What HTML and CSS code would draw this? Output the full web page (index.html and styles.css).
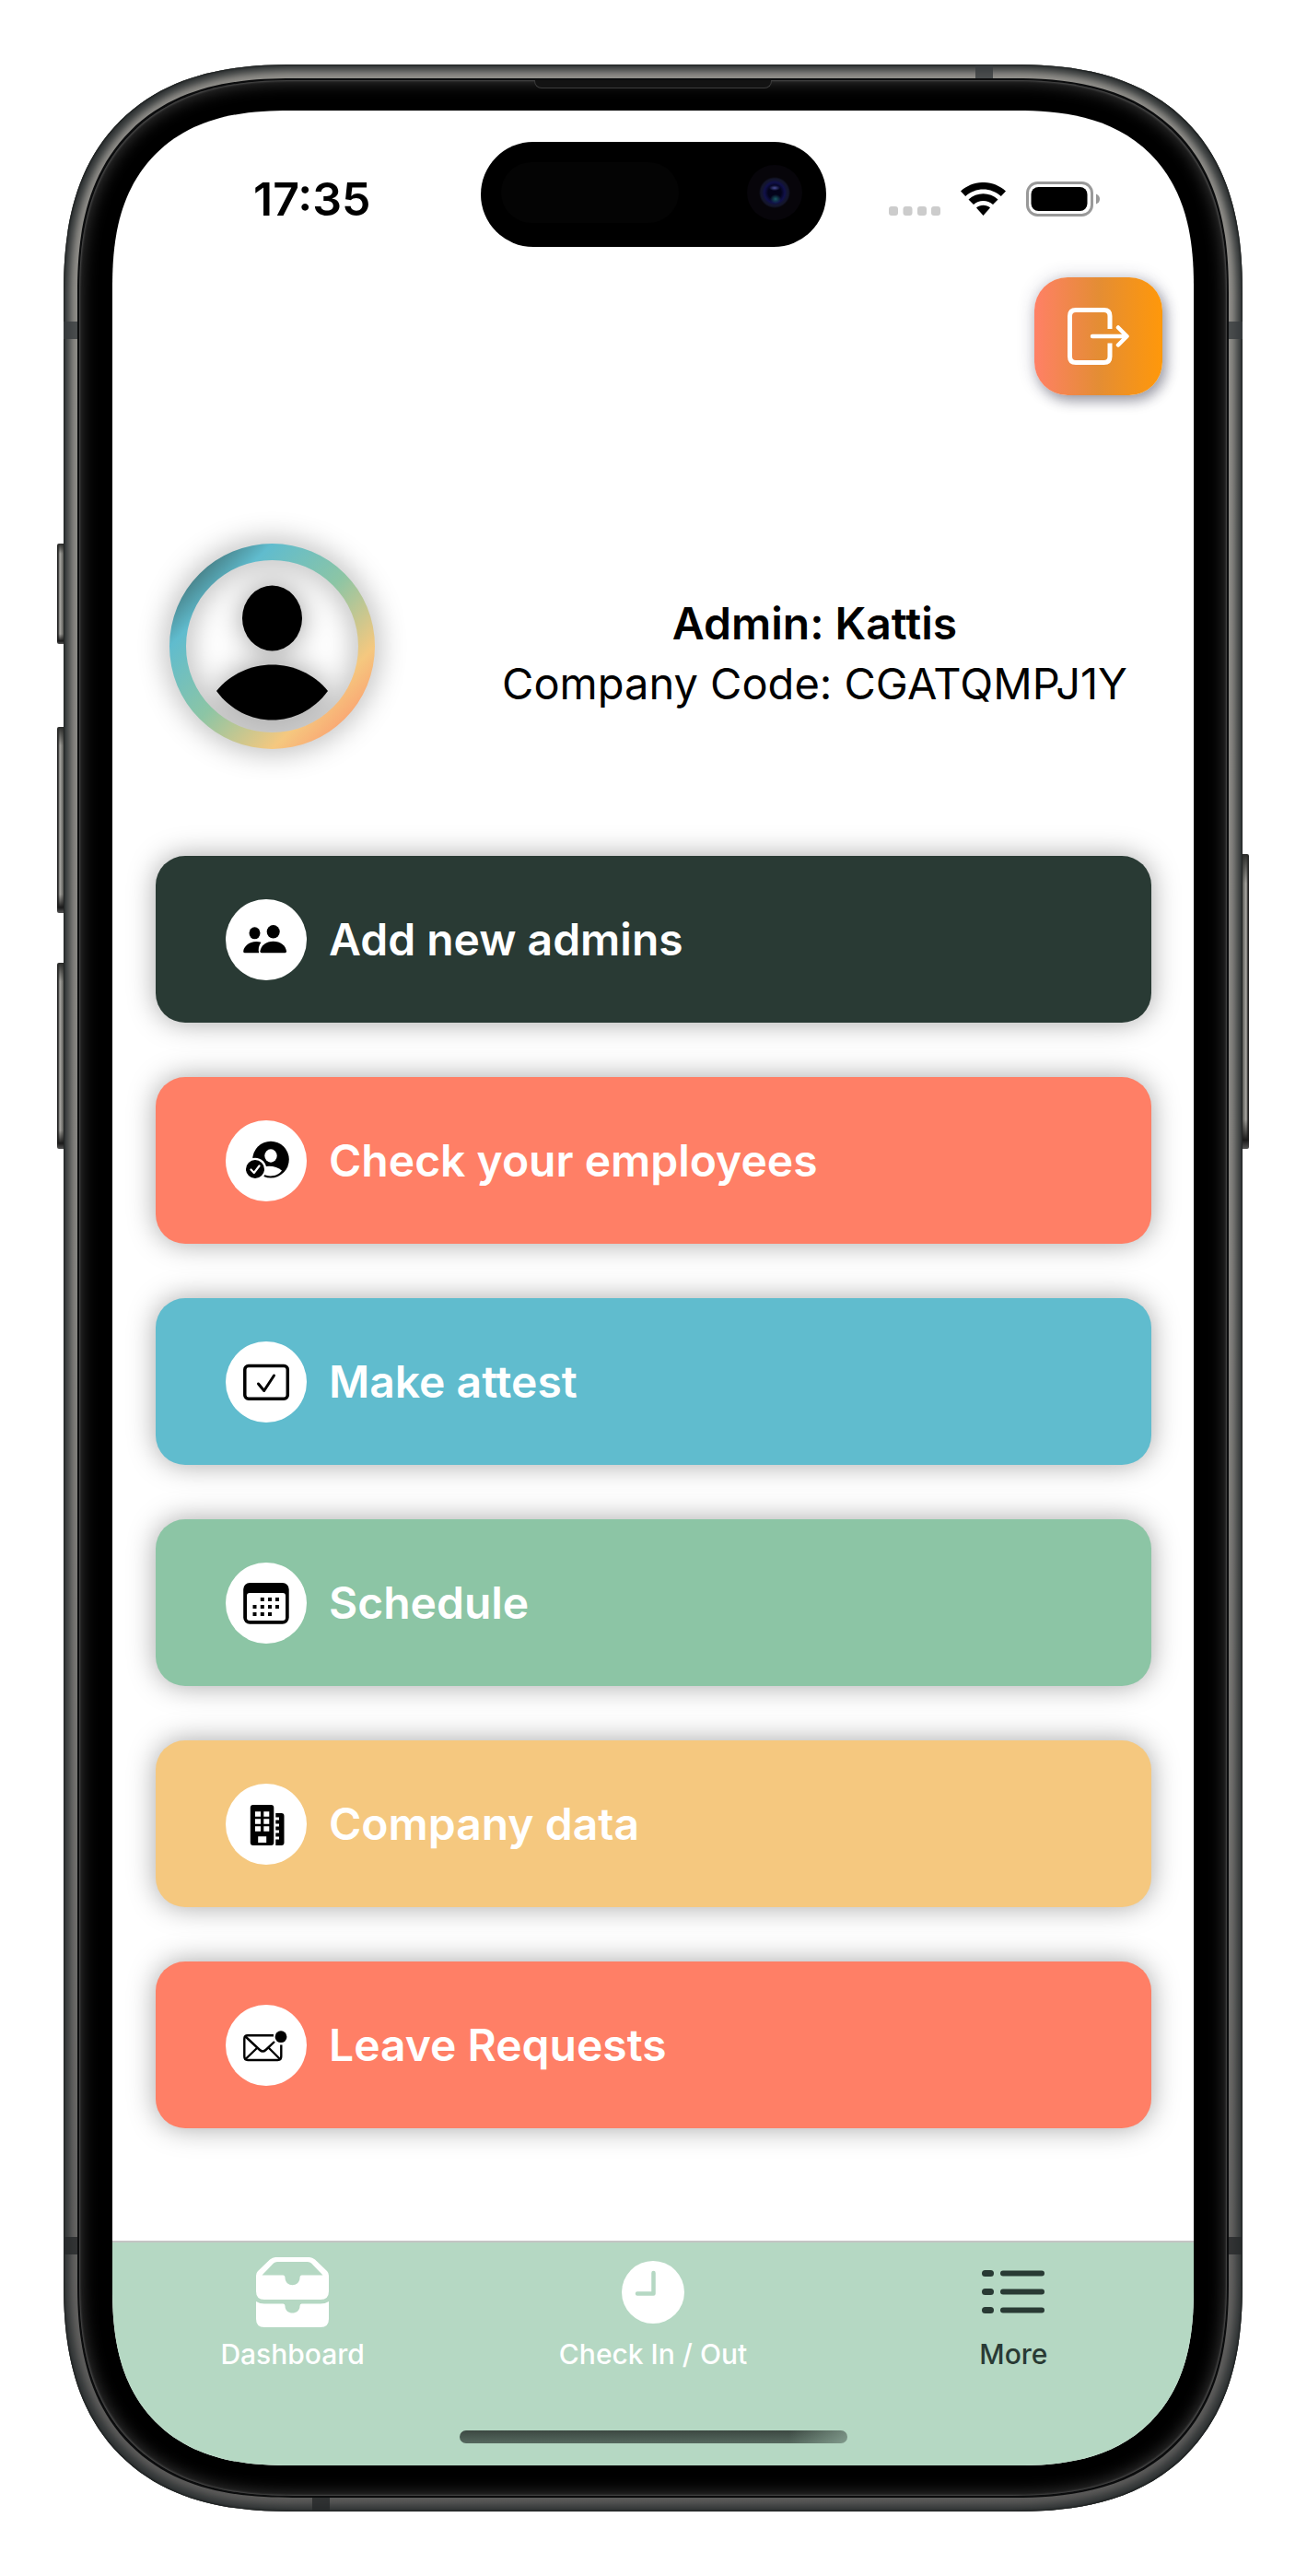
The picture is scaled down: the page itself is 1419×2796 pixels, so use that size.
FILE: index.html
```html
<!DOCTYPE html>
<html lang="en">
<head>
<meta charset="utf-8">
<meta name="viewport" content="width=device-width, initial-scale=1">
<title>More</title>
<link rel="stylesheet" href="styles.css">
</head>
<body>
<div class="phone">
  <span class="key key-action"></span>
  <span class="key key-up"></span>
  <span class="key key-down"></span>
  <span class="key key-power"></span>
  <span class="band band-left"></span>
  <span class="band band-right"></span>
  <span class="band band-left band-low"></span>
  <span class="band band-right band-low"></span>
  <span class="band band-top"></span>
  <span class="band band-bottom"></span>
  <div class="bezel">
    <span class="earpiece"></span>
    <div class="screen">
      <header class="status">
        <div class="status-side"><time class="clock">17:35</time></div>
        <div class="island"><span class="sensor"></span><span class="camera"></span></div>
        <div class="status-side status-icons">
          <svg width="56" height="10" viewBox="0 0 56 10" class="signal" aria-hidden="true"><g fill="#ccc"><rect width="10" height="10" rx="3"/><rect x="15.5" width="10" height="10" rx="3"/><rect x="31" width="10" height="10" rx="3"/><rect x="46" width="10" height="10" rx="3"/></g></svg>
          <svg width="49" height="36" viewBox="0 0 49 36" aria-hidden="true"><path d="M0 9.5C14-3.2 35-3.2 49 9.5L43.800 15C33 5 16 5 5.200 15Z"/><path d="M8.500 18.500C17.500 10 31.500 10 40.500 18.500L35 24C29 18.500 20 18.500 14 24Z"/><path d="M17 27.500C21 23.700 28 23.700 32 27.500L24.500 36Z"/></svg>
          <svg width="80" height="38" viewBox="0 0 80 38" aria-hidden="true"><rect x="1.500" y="1.500" width="70" height="35" rx="11" fill="none" stroke="#999" stroke-width="3"/><rect x="5.500" y="6" width="61" height="26" rx="8"/><path d="M76 13.500Q80 15 80 19T76 24.500Z" fill="#999"/></svg>
        </div>
      </header>

      <div class="toolbar">
        <button class="logout" type="button" aria-label="Log out">
          <svg width="67" height="62" viewBox="0 0 67 62" fill="none" stroke="#fff" stroke-width="5" stroke-linecap="round" stroke-linejoin="round" aria-hidden="true"><path stroke-linecap="butt" d="M46 23V9Q46 2.500 39.500 2.500H9Q2.500 2.500 2.500 9V53Q2.500 59.500 9 59.500H39.500Q46 59.500 46 53V38.500"/><path stroke-width="4.500" d="M27 31H64M55 21.500L64.500 31L55 40.500"/></svg>
        </button>
      </div>

      <section class="profile">
        <svg class="avatar" width="223" height="223" viewBox="0 0 223 223" aria-hidden="true">
          <defs><linearGradient id="ring" x1="0" y1="0" x2="1" y2="1"><stop offset="0" stop-color="#293a34"/><stop offset=".25" stop-color="#60bcce"/><stop offset=".5" stop-color="#8cc5a5"/><stop offset=".75" stop-color="#f5c87f"/><stop offset="1" stop-color="#ff8066"/></linearGradient></defs>
          <path fill="url(#ring)" fill-rule="evenodd" d="M111.500 0a111.500 111.500 0 1 1 0 223a111.500 111.500 0 1 1 0-223ZM111.500 18a93.500 93.500 0 1 0 0 187a93.500 93.500 0 1 0 0-187Z"/>
          <ellipse cx="111.500" cy="81" rx="32.500" ry="35.500"/>
          <path d="M51 160C82 122 141 122 172 160C141 202 82 202 51 160Z"/>
        </svg>
        <div class="identity">
          <h1 class="name">Admin: Kattis</h1>
          <p class="code">Company Code: CGATQMPJ1Y</p>
        </div>
      </section>

      <nav class="menu" aria-label="Admin">
        <button class="item dark" type="button">
          <svg class="icon" width="88" height="88" viewBox="0 0 88 88" aria-hidden="true"><ellipse cx="31.500" cy="36.800" rx="6" ry="6.500"/><ellipse cx="51.700" cy="35.300" rx="7" ry="7.200"/><path d="M38.500 46.700C27 44 19.500 51 19.200 56.800Q19.200 58.300 21 58.300H36.200C35 54.500 36 50 38.500 46.700Z"/><path d="M39 58.300Q37.300 58.300 37.400 56.500C38.500 50 44 45.700 51.700 45.700S65 50 66 56.500Q66 58.300 64.500 58.300Z"/></svg>
          <span>Add new admins</span>
        </button>
        <button class="item coral" type="button">
          <svg class="icon" width="88" height="88" viewBox="0 0 88 88" aria-hidden="true"><circle cx="49" cy="42.600" r="19.800"/><ellipse cx="49" cy="38.500" rx="6.700" ry="7.200" fill="#fff"/><path fill="#fff" d="M37 52C43 48.500 55 48.500 61 54.500C56 61.500 46 61.800 40 58Z"/><circle cx="32" cy="53" r="12.300" fill="#fff"/><circle cx="32" cy="53" r="10"/><path d="M27.500 53.500L30.800 57L36.500 49.500" fill="none" stroke="#fff" stroke-width="2.200" stroke-linecap="round" stroke-linejoin="round"/></svg>
          <span>Check your employees</span>
        </button>
        <button class="item blue" type="button">
          <svg class="icon" width="88" height="88" viewBox="0 0 88 88" fill="none" stroke="#000" stroke-linecap="round" stroke-linejoin="round" aria-hidden="true"><rect x="20.800" y="26.500" width="46.500" height="35.700" rx="4" stroke-width="3.500"/><path stroke-width="3" d="M35.500 46L41.700 53.500L52.500 37"/></svg>
          <span>Make attest</span>
        </button>
        <button class="item green" type="button">
          <svg class="icon" width="88" height="88" viewBox="0 0 88 88" aria-hidden="true"><rect x="19.200" y="22" width="49.500" height="44.700" rx="7"/><rect x="23" y="33" width="42" height="30" rx="3" fill="#fff"/><path stroke="#000" stroke-width="4" stroke-linecap="butt" d="M37.800 40h4M46 40h4M54 40h4M29.500 48h4M37.800 48h4M46 48h4M54 48h4M29.500 56h4M37.800 56h4M46 56h4"/></svg>
          <span>Schedule</span>
        </button>
        <button class="item sand" type="button">
          <svg class="icon" width="88" height="88" viewBox="0 0 88 88" aria-hidden="true"><rect x="26.800" y="23" width="25.500" height="44" rx="3"/><path d="M54.300 32H60.500Q63.500 32 63.500 35V64Q63.500 67 60.500 67H54.300V60.500H58V57.500H54.300V53.500H58V50.500H54.300V46.500H58V43.500H54.300V39.500H58V36.500H54.300Z"/><path fill="#fff" d="M32 30.300h6v5.500h-6zM41.300 30.300h6v5.500h-6zM32 38.200h6v5.500h-6zM41.300 38.200h6v5.500h-6zM32 46.200h6v5.500h-6zM41.300 46.200h6v5.500h-6zM35.200 57.300h9v6.700h-9z"/></svg>
          <span>Company data</span>
        </button>
        <button class="item coral" type="button">
          <svg class="icon" width="88" height="88" viewBox="0 0 88 88" fill="none" stroke="#000" stroke-width="2.400" aria-hidden="true"><path d="M52 33.200H24Q20.300 33.200 20.300 37V56Q20.300 60 24 60H56.500Q60.300 60 60.300 56V43.500"/><path d="M21.500 34.500L37 49Q40.300 52 43.500 49L53 40M21.500 59L34.500 46.500M59 59L46.500 46.500"/><circle cx="60" cy="34.700" r="6.400" fill="#000" stroke="none"/></svg>
          <span>Leave Requests</span>
        </button>
      </nav>

      <footer class="tabs">
        <nav class="tab-row" aria-label="Main">
          <a class="tab" href="#dashboard">
            <svg width="79" height="76" viewBox="0 0 79 76" fill="#fff" aria-hidden="true"><path fill-rule="evenodd" d="M0 20Q0 17 2 15L15 2.500Q18 0 21 0H58Q61 0 64 2.500L77 15Q79 17 79 20V37Q79 46 70 46H9Q0 46 0 37ZM6.500 19.500H29.500Q31.500 19.500 31.500 22C31.500 33 47.500 33 47.500 22Q47.500 19.500 49.500 19.500H72.500L60 6.500Q58.500 5 56 5H23Q20.500 5 19 6.500Z"/><path d="M0 48Q4 50.500 9 50.500H29.500Q31.500 50.500 31.500 53C31.500 63 47.500 63 47.500 53Q47.500 50.500 49.500 50.500H70Q75 50.500 79 48V67Q79 76 70 76H9Q0 76 0 67Z"/></svg>
            <span>Dashboard</span>
          </a>
          <a class="tab" href="#check">
            <svg width="68" height="76" viewBox="0 0 68 76" aria-hidden="true"><circle cx="34" cy="38" r="34" fill="#fff"/><path d="M34.500 17V39.500H17" fill="none" stroke="#b5d8c3" stroke-width="4.500" stroke-linecap="round" stroke-linejoin="round"/></svg>
            <span>Check In / Out</span>
          </a>
          <a class="tab active" href="#more" aria-current="page">
            <svg width="68" height="76" viewBox="0 0 68 76" fill="#293a34" aria-hidden="true"><rect y="14" width="13" height="7" rx="3.500"/><rect y="34" width="13" height="7" rx="3.500"/><rect y="54" width="13" height="7" rx="3.500"/><rect x="20" y="14.500" width="48" height="6" rx="3"/><rect x="20" y="34.500" width="48" height="6" rx="3"/><rect x="20" y="54.500" width="48" height="6" rx="3"/></svg>
            <span>More</span>
          </a>
        </nav>
        <div class="home"></div>
      </footer>
    </div>
  </div>
</div>
</body>
</html>
```
FILE: styles.css
```css
* { box-sizing: border-box; }

body {
  margin: 0;
  padding: 70px 70px 70px 69px;
  background: #fff;
  color: #000;
  font-family: Inter, "Liberation Sans", sans-serif;
}

button {
  border: 0;
  padding: 0;
  font: inherit;
  cursor: pointer;
}

svg { display: block; flex: none; }

/* Device frame */
.phone {
  position: relative;
  padding: 17px;
  border-radius: 210px;
  background: linear-gradient(#94928d, #8a8884 50%, #5c5b5a);
  box-shadow: inset 0 0 2px 1px #1d2020, inset 0 0 8px 7px #303435;
}

.bezel {
  position: relative;
  padding: 33px 36px;
  border-radius: 193px;
  background: #000;
  box-shadow: 0 0 0 2px #0b0c0d, inset 0 0 2px 1px #4a4a4a, inset 0 0 18px 2px #3a3a3a;
}

.screen {
  position: relative;
  overflow: hidden;
  border-radius: 158px;
  background: #fff;
}

@supports (corner-shape: superellipse(1.3)) {
  .phone { border-radius: 250px; corner-shape: superellipse(1.3); }
  .bezel { border-radius: 233px; corner-shape: superellipse(1.3); }
  .screen { border-radius: 192px; corner-shape: superellipse(1.3); }
}

.key {
  position: absolute;
  left: -7px;
  width: 7px;
  height: 202px;
  border-radius: 2px 0 0 2px;
  background: linear-gradient(#2b2c2a, transparent 10%, transparent 90%, #1a1a1a 97%, #555), linear-gradient(90deg, #222 1px, #aaa9a4 3px, #5c5c58);
}
.key-action { top: 520px; height: 109px; }
.key-up { top: 719px; }
.key-down { top: 975px; }
.key-power {
  top: 857px;
  left: auto;
  right: -7px;
  height: 320px;
  transform: scaleX(-1);
}

.band {
  position: absolute;
  width: 15px;
  height: 19px;
  background: rgba(56, 60, 62, .8);
}
.band-left { left: 0; top: 279px; }
.band-right { right: 0; top: 279px; }
.band-low { top: auto; bottom: 279px; background: rgba(38, 40, 41, .8); }
.band-top { right: 271px; top: 1px; width: 19px; height: 14px; }
.band-bottom { left: 270px; bottom: 1px; width: 19px; height: 14px; background: rgba(38, 40, 41, .8); }

.earpiece {
  position: absolute;
  top: 0;
  left: 50%;
  width: 258px;
  height: 9px;
  margin-left: -129px;
  border: 1px solid #3c3c3c;
  border-top: 0;
  border-radius: 0 0 8px 8px;
  background: #131313;
}

/* Status bar */
.status {
  display: grid;
  grid-template-columns: 1fr 375px 1fr;
  padding-top: 34px;
}

.status-side {
  display: flex;
  align-items: center;
  padding: 9px 0 0 153px;
}

.clock {
  font-size: 50px;
  font-weight: 600;
  line-height: 58px;
}

.status-icons {
  justify-content: flex-end;
  gap: 22px;
  padding: 9px 102px 0 0;
}
.signal { margin-top: 26px; }

.island {
  display: flex;
  align-items: center;
  justify-content: space-between;
  height: 114px;
  padding: 0 26px 4px 22px;
  border-radius: 57px;
  background: #000;
}
.sensor {
  width: 193px;
  height: 66px;
  border-radius: 33px;
  background: #040404;
}
.camera {
  width: 60px;
  height: 60px;
  border-radius: 50%;
  background:
    radial-gradient(ellipse 6px 3px at 30px 25px, #4a4f9a, transparent),
    radial-gradient(ellipse 6px 5px at 31px 37px, #1a5c66, transparent),
    radial-gradient(circle at 30px 30px, #03031a 7px, #10104a 11px, #14162c 14px, #14162c 15px, #07050a 17px);
}

.toolbar {
  display: flex;
  justify-content: flex-end;
  padding: 33px 34px 0;
}
.logout {
  display: flex;
  align-items: center;
  justify-content: center;
  width: 139px;
  height: 128px;
  padding-bottom: 1px;
  border-radius: 36px;
  background: linear-gradient(90deg, #ff8066, #e48d34 50%, #ff980a);
  box-shadow: 4px 6px 14px rgba(40, 40, 60, .4), 0 0 20px rgba(40, 40, 80, .2);
}

/* Profile */
.profile {
  display: flex;
  align-items: center;
  justify-content: space-between;
  padding: 161px 72px 0 62px;
}
.avatar {
  filter: drop-shadow(0 0 16px rgba(0, 0, 0, .4));
}
.identity {
  padding-top: 14px;
  text-align: center;
}
.name,
.code {
  margin: 0;
  line-height: 65px;
}
.name { font-size: 48px; font-weight: 600; }
.code { font-size: 47px; font-weight: 400; }

/* Menu */
.menu {
  display: flex;
  flex-direction: column;
  gap: 59px;
  padding: 116px 46px 122px 47px;
}
.item {
  display: flex;
  align-items: center;
  gap: 24px;
  min-height: 181px;
  padding: 0 76px;
  border-radius: 32px;
  color: #fff;
  font-size: 48px;
  font-weight: 600;
  line-height: 58px;
  text-align: left;
  box-shadow: 0 0 30px rgba(0, 0, 0, .35);
}
.icon {
  border-radius: 50%;
  background: #fff;
}
.dark { background: #293a34; }
.coral { background: #ff7f66; }
.blue { background: #60bcce; }
.green { background: #8cc5a5; }
.sand { background: #f5c87f; }

/* Tab bar */
.tabs {
  display: flex;
  flex-direction: column;
  align-items: center;
  padding: 16px 0 24px;
  border-top: 2px solid #c4c4c4;
  background: #b5d8c3;
}
.tab-row {
  display: grid;
  grid-template-columns: repeat(3, 1fr);
  align-self: stretch;
}
.tab {
  display: flex;
  flex-direction: column;
  align-items: center;
  gap: 12px;
  color: #fff;
  font-size: 30px;
  font-weight: 500;
  line-height: 34px;
  text-decoration: none;
}
.active { color: #293a34; }

.home {
  width: 421px;
  height: 14px;
  margin-top: 66px;
  border-radius: 7px;
  background: linear-gradient(90deg, transparent 85%, rgba(181, 216, 195, .45)), linear-gradient(#3c4842, #56695f);
}
```
